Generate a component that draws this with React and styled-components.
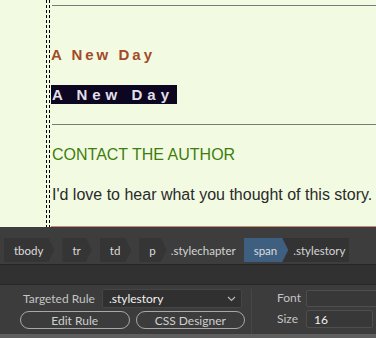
import React from "react";
import styled, { createGlobalStyle } from "styled-components";

const GlobalStyle = createGlobalStyle`
    html, body {
        margin: 0;
        padding: 0;
        background: #3c3c3c;
    }
    body {
        width: 376px;
        height: 338px;
        overflow: hidden;
    }
`;

const crumbs = [
    { tag: "tbody" },
    { tag: "tr" },
    { tag: "td" },
    { tag: "p", cls: ".stylechapter" },
    { tag: "span", cls: ".stylestory", active: true },
];

function App() {
    return (
        <>
            <GlobalStyle />
            <Screen>
                <Canvas>
                    <Gutter />
                    <DashRule />
                    <Spacer />
                    <DashRule />
                    <Page>
                        <Rule />
                        <Chapter>A New Day</Chapter>
                        <StoryRow>
                            <Story>A New Day</Story>
                        </StoryRow>
                        <Rule $top={20} />
                        <Contact>CONTACT THE AUTHOR</Contact>
                        <Body>I'd love to hear what you thought of this story.</Body>
                        <BottomRule />
                    </Page>
                </Canvas>
                <Crumbs>
                    {crumbs.map((c) => (
                        <Crumb key={c.tag} $active={c.active}>
                            <CrumbTag $active={c.active}>{c.tag}</CrumbTag>
                            {c.cls && <CrumbClass $active={c.active}>{c.cls}</CrumbClass>}
                        </Crumb>
                    ))}
                </Crumbs>
                <Strip />
                <Props>
                    <LeftCol>
                        <RuleRow>
                            <Label>Targeted Rule</Label>
                            <Select>
                                <span>.stylestory</span>
                                <svg width="9" height="6" viewBox="0 0 9 6">
                                    <polyline
                                        points="1,1 4.5,4.5 8,1"
                                        fill="none"
                                        stroke="#b8b8b8"
                                        strokeWidth="1.2"
                                    />
                                </svg>
                            </Select>
                        </RuleRow>
                        <ButtonRow>
                            <Pill>Edit Rule</Pill>
                            <Pill>CSS Designer</Pill>
                        </ButtonRow>
                    </LeftCol>
                    <Divider />
                    <RightCol>
                        <Label>Font</Label>
                        <Field $h={17} />
                        <Label>Size</Label>
                        <SizeFields>
                            <Field $w={67}>16</Field>
                            <Field $w={10} />
                        </SizeFields>
                    </RightCol>
                </Props>
                <Footer />
            </Screen>
        </>
    );
}

const Screen = styled.div`
    width: 376px;
    height: 338px;
    display: flex;
    flex-direction: column;
    overflow: hidden;
`;
const Canvas = styled.div`
    height: 227px;
    display: flex;
    background-color: #f2fbe2;
    flex-shrink: 0;
`;
const Gutter = styled.div`
    width: 46px;
`;
const DashRule = styled.div`
    width: 1px;
    background: repeating-linear-gradient(to bottom, #000 0 3px, transparent 3px 5px);
`;
const Spacer = styled.div`
    width: 2px;
`;
const Page = styled.div`
    flex: 1;
    display: flex;
    flex-direction: column;
    padding-left: 1px;
    font-family: "Liberation Sans", Arial, sans-serif;
`;
const Rule = styled.div`
    height: 1px;
    margin-top: ${(p) => (p.$top !== undefined ? p.$top : 5)}px;
    margin-left: 1px;
    background-color: #7a7a7a;
`;
const Chapter = styled.div`
    margin-top: 40px;
    font-size: 15px;
    line-height: 18px;
    font-weight: bold;
    letter-spacing: 3px;
    color: #a24a2a;
`;
const StoryRow = styled.div`
    margin-top: 21px;
    display: flex;
`;
const Story = styled.span`
    display: inline-block;
    font-size: 15px;
    line-height: 19px;
    font-weight: bold;
    letter-spacing: 5px;
    padding: 0 3px 0 1px;
    color: #e2dfea;
    background-color: #0c0620;
`;
const Contact = styled.div`
    margin-top: 21px;
    margin-left: 1px;
    font-size: 16px;
    line-height: 18px;
    color: #3f7d0e;
`;
const Body = styled.div`
    margin-top: 22px;
    margin-left: 1px;
    font-size: 16px;
    line-height: 18px;
    color: #2a2a2a;
    white-space: nowrap;
`;
const BottomRule = styled.div`
    margin-top: auto;
    height: 1px;
    background-color: #c98a78;
`;
const Crumbs = styled.div`
    height: 38px;
    display: flex;
    align-items: flex-start;
    gap: 8px;
    padding: 11px 0 0 4px;
    box-sizing: border-box;
    background-color: #3d3d3d;
    border-bottom: 1px solid #262626;
    font-family: Lato, "Open Sans", sans-serif;
    font-size: 11.5px;
    flex-shrink: 0;
`;
const Crumb = styled.div`
    display: flex;
    height: 24px;
    background-color: ${(p) => (p.$active ? "#333" : "transparent")};
`;
const CrumbTag = styled.div`
    display: flex;
    align-items: center;
    padding: 0 11px 0 10px;
    color: #dcdcdc;
    background-color: ${(p) => (p.$active ? "#3e5f80" : "#353535")};
    clip-path: polygon(0 0, calc(100% - 6px) 0, 100% 50%, calc(100% - 6px) 100%, 0 100%);
`;
const CrumbClass = styled.div`
    display: flex;
    align-items: center;
    padding: ${(p) => (p.$active ? "0 3px 0 5px" : "0 0 0 4px")};
    color: #d4d4d4;
`;
const Strip = styled.div`
    height: 19px;
    background-color: #313131;
    border-bottom: 1px solid #282828;
    flex-shrink: 0;
`;
const Props = styled.div`
    height: 49px;
    display: flex;
    padding-top: 4px;
    box-sizing: border-box;
    background-color: #3c3c3c;
    font-family: Lato, "Open Sans", sans-serif;
    font-size: 12px;
    color: #c4c4c4;
    flex-shrink: 0;
`;
const LeftCol = styled.div`
    width: 225px;
    padding-left: 20px;
    display: flex;
    flex-direction: column;
    gap: 3px;
`;
const RuleRow = styled.div`
    display: flex;
    align-items: center;
    gap: 7px;
    padding-left: 3px;
`;
const Label = styled.span`
    color: #c4c4c4;
    line-height: 18px;
`;
const Select = styled.div`
    width: 140px;
    height: 19px;
    box-sizing: border-box;
    display: flex;
    align-items: center;
    justify-content: space-between;
    padding: 0 5px 0 6px;
    background-color: #303030;
    border: 1px solid #464646;
    border-radius: 2px;
    color: #f0f0f0;
`;
const ButtonRow = styled.div`
    display: flex;
    gap: 6px;
`;
const Pill = styled.button`
    width: 110px;
    height: 18px;
    box-sizing: border-box;
    padding: 0;
    border: 1px solid #a8a8a8;
    border-radius: 9px;
    background: transparent;
    color: #cfcfcf;
    font-family: inherit;
    font-size: 12px;
`;
const Divider = styled.div`
    width: 1px;
    margin: 0 25px 0 6px;
    background-color: #2a2a2a;
    border-right: 1px solid #474747;
`;
const RightCol = styled.div`
    display: grid;
    grid-template-columns: 29px auto;
    row-gap: 3px;
    align-items: center;
    align-content: start;
`;
const SizeFields = styled.div`
    display: flex;
    gap: 3px;
`;
const Field = styled.div`
    width: ${(p) => (p.$w ? p.$w : 80)}px;
    height: ${(p) => (p.$h ? p.$h : 18)}px;
    box-sizing: border-box;
    padding-left: 7px;
    display: flex;
    align-items: center;
    background-color: #383838;
    border: 1px solid #4e4e4e;
    border-radius: 2px;
    color: #f0f0f0;
    font-size: 12px;
`;
const Footer = styled.div`
    flex: 1;
    background-color: #5e5e5e;
`;

export default App;
